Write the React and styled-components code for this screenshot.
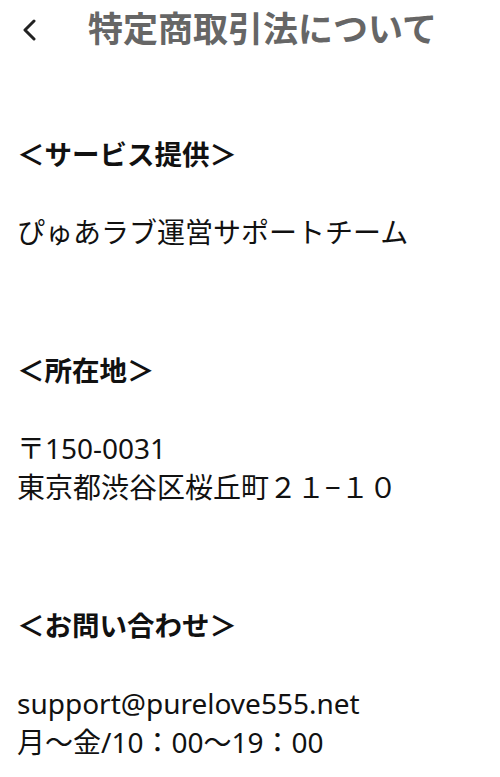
import React from 'react';
import styled, {createGlobalStyle} from 'styled-components';

const GlobalStyle = createGlobalStyle`
    body {
        margin: 0;
        background: #fff;
        font-family: "Noto Sans", "Noto Sans CJK JP", sans-serif;
        color: #111;
    }
`;

const sections = [
    {title: '＜サービス提供＞', lines: ['ぴゅあラブ運営サポートチーム']},
    {title: '＜所在地＞', lines: ['〒150-0031', '東京都渋谷区桜丘町２１−１０']},
    {title: '＜お問い合わせ＞', lines: ['support@purelove555.net', '月～金/10：00～19：00']},
];

const App = () => {
    return (
        <>
        <GlobalStyle />
        <Page>
            <Header>
                <BackButton aria-label="back">
                    <svg width="14" height="22" viewBox="0 0 14 22" fill="none">
                        <path d="M12 2 L3 11 L12 20" stroke="#222" strokeWidth="3" strokeLinecap="round" strokeLinejoin="round"/>
                    </svg>
                </BackButton>
                <Title>特定商取引法について</Title>
            </Header>
            <Content>
                {sections.map((s) => (
                    <Section key={s.title}>
                        <Heading>{s.title}</Heading>
                        <Body>
                            {s.lines.map((l) => <Line key={l}>{l}</Line>)}
                        </Body>
                    </Section>
                ))}
            </Content>
        </Page>
        </>
    )
}

const Page = styled.div`
    width: 500px;
    min-height: 777px;
    background: #fff;
`;
const Header = styled.div`
    display: flex;
    align-items: center;
    height: 54px;
    padding-left: 22px;
`;
const BackButton = styled.button`
    display: flex;
    align-items: center;
    justify-content: center;
    width: 14px;
    height: 24px;
    padding: 0;
    margin: 6px 52px 0 0;
    border: none;
    background: none;
`;
const Title = styled.h1`
    margin: 0;
    font-size: 35px;
    line-height: 54px;
    font-weight: 700;
    color: #666;
    font-family: "Noto Sans CJK JP", sans-serif;
`;
const Content = styled.div`
    padding: 80px 17px 0 17px;
`;
const Section = styled.div`
    margin-bottom: 98px;
`;
const Heading = styled.h2`
    margin: 0 0 41px;
    font-size: 27.5px;
    line-height: 38px;
    font-weight: 700;
    font-family: "Noto Sans CJK JP", sans-serif;
`;
const Body = styled.div`
    font-size: 28px;
    line-height: 39px;
`;
const Line = styled.div``;

export default App;
